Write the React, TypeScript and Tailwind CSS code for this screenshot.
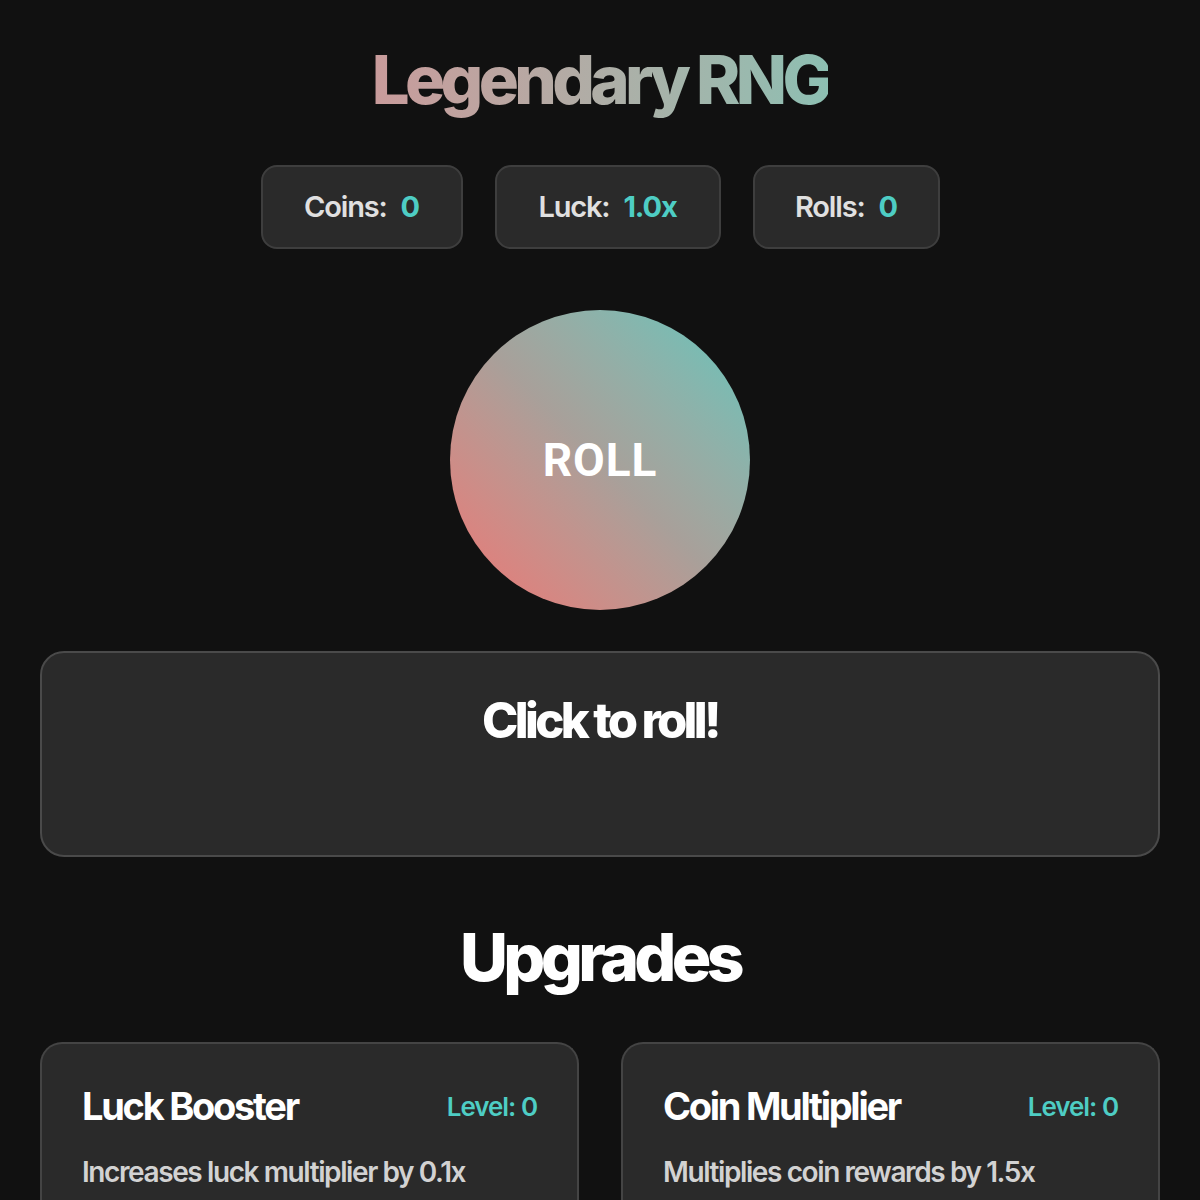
import React from "react"

const font = { fontFamily: "Inter, 'Noto Sans', sans-serif" }

function Stat({ label, value, w }: { label: string; value: string; w: string }) {
  return (
    <div
      className={`${w} h-[84px] flex items-center justify-center gap-[14px] rounded-[16px] border-2 border-[#3e3e3e] bg-[#2a2a2a] text-[29px] font-semibold tracking-[-0.04em]`}
    >
      <span className="text-[#e0e0e0]">{label}</span>
      <span className="text-[#4ecdc4] font-bold">{value}</span>
    </div>
  )
}

function Upgrade({ title, desc }: { title: string; desc: string }) {
  return (
    <div className="rounded-t-[22px] border-2 border-b-0 border-[#444] bg-[#2a2a2a] px-[40px] pt-[38px] pb-[20px]">
      <div className="flex items-center justify-between">
        <h3 className="text-[38px] leading-[48px] font-bold tracking-[-0.06em] text-white">{title}</h3>
        <span className="text-[26px] font-semibold tracking-[-0.04em] text-[#4ecdc4]">Level: 0</span>
      </div>
      <p className="mt-[25px] text-[28px] leading-[34px] font-semibold tracking-[-0.05em] text-[#d2d2d2]">{desc}</p>
    </div>
  )
}

export default function App() {
  return (
    <div className="min-h-[1200px] h-[1200px] overflow-hidden bg-[#111111]" style={font}>
      <div className="mx-auto w-[1120px] flex flex-col items-center pt-[40px]">
        <h1 className="text-[67px] leading-[80px] font-extrabold tracking-[-0.07em] bg-gradient-to-r from-[#c99b9b] to-[#8dbfb2] bg-clip-text text-transparent">
          Legendary RNG
        </h1>
        <div className="mt-[45px] flex gap-[32px]">
          <Stat label="Coins:" value="0" w="w-[202px]" />
          <Stat label="Luck:" value="1.0x" w="w-[226px]" />
          <Stat label="Rolls:" value="0" w="w-[187px]" />
        </div>
        <button
          className="mt-[61px] h-[300px] w-[300px] rounded-full bg-gradient-to-tr from-[#ec7474] via-[#a8a09a] to-[#5ec5bc] flex items-center justify-center"
          style={{ fontFamily: "Roboto, sans-serif" }}
        >
          <span className="text-[46px] font-bold tracking-[0.02em] text-white">ROLL</span>
        </button>
        <div className="mt-[41px] w-full h-[206px] rounded-[24px] border-2 border-[#4a4a4a] bg-[#2a2a2a] pt-[38px] text-center">
          <h2 className="text-[49px] leading-[60px] font-extrabold tracking-[-0.075em] text-white">Click to roll!</h2>
        </div>
        <h2 className="mt-[60px] text-[66px] leading-[80px] font-extrabold tracking-[-0.07em] text-white">Upgrades</h2>
        <div className="mt-[45px] w-full grid grid-cols-2 gap-[42px]">
          <Upgrade title="Luck Booster" desc="Increases luck multiplier by 0.1x" />
          <Upgrade title="Coin Multiplier" desc="Multiplies coin rewards by 1.5x" />
        </div>
      </div>
    </div>
  )
}
